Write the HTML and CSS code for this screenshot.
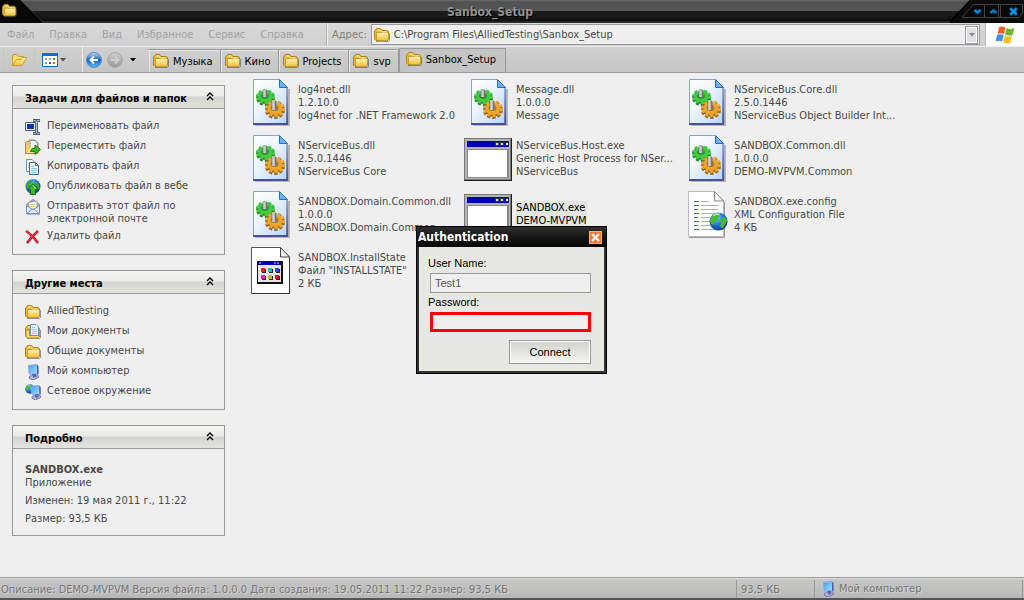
FILE: index.html
```html
<!DOCTYPE html>
<html lang="ru">
<head>
<meta charset="utf-8">
<title>Sanbox_Setup</title>
<link rel="stylesheet" href="styles.css">
</head>
<body>
<svg class="defs" aria-hidden="true">
  <defs>
    <linearGradient id="gFolder" x1="0" y1="0" x2="0" y2="1"><stop offset="0" stop-color="#fff6b8"/><stop offset="1" stop-color="#f2be3a"/></linearGradient>
    <linearGradient id="gPage" x1="0" y1="0" x2="1" y2="1"><stop offset="0" stop-color="#ffffff"/><stop offset="0.35" stop-color="#f2f8ff"/><stop offset="1" stop-color="#b4d4fb"/></linearGradient>
    <linearGradient id="gEdge" x1="0" y1="0" x2="0" y2="1"><stop offset="0" stop-color="#8ba6cf"/><stop offset="1" stop-color="#4a4e96"/></linearGradient>
    <radialGradient id="gGlobe" cx="0.4" cy="0.3" r="0.8"><stop offset="0" stop-color="#7cc8ff"/><stop offset="0.5" stop-color="#2470d8"/><stop offset="1" stop-color="#0c2a80"/></radialGradient>
    <linearGradient id="gBlueBtn" x1="0" y1="0" x2="0" y2="1"><stop offset="0" stop-color="#b8dcf8"/><stop offset="0.5" stop-color="#1560c0"/><stop offset="1" stop-color="#52c4ff"/></linearGradient>
    <linearGradient id="gGreyBtn" x1="0" y1="0" x2="0" y2="1"><stop offset="0" stop-color="#cccccc"/><stop offset="1" stop-color="#999999"/></linearGradient>
    <linearGradient id="gScreen" x1="0" y1="0" x2="1" y2="1"><stop offset="0" stop-color="#3c9cf4"/><stop offset="1" stop-color="#b8ecff"/></linearGradient>
  </defs>
  <symbol id="folder" viewBox="0 0 16 16">
    <path d="M2 14.500H14.500L15.500 13.500V6" fill="none" stroke="#555" stroke-opacity=".6"/>
    <path d="M.5 4V12L2 13.500H13.500L14.500 12V4.500L13.500 3.500H8L6.500 1.500H2.500L1.500 3Z" fill="#e8b83c" stroke="#b48018"/>
    <path d="M2.500 5.500H13.500L14.500 6.500V12L13.500 13.500H3.500L2.500 12.500Z" fill="url(#gFolder)" stroke="#c89828"/>
    <path d="M3 3H6L7.500 5H13" fill="none" stroke="#fff2a0"/>
  </symbol>
  <symbol id="folderopen" viewBox="0 0 16 16">
    <path d="M1.500 13.500V3.500L3 2.500H6L7.500 4.500H12.500V7" fill="#f8dc78" stroke="#c99a2c"/>
    <path d="M1.500 13.500L5.500 7.500H10L11.500 5.500H15.500L12 12.500L10 13.500Z" fill="url(#gFolder)" stroke="#d69b22"/>
  </symbol>
  <symbol id="docfolder" viewBox="0 0 16 16">
    <use href="#folder"/>
    <path d="M5.500 .5H11L13.500 3V11.500H5.500Z" fill="#eef8ff" stroke="#5c94c8"/>
    <path d="M7 3.500H10M7 5.500H12M7 7.500H12M7 9.500H12" stroke="#8cc4ec"/>
    <path d="M1 6V12.500L2.500 14H13L15 12V11.500H4.500V6Z" fill="#f8d870" stroke="#bc8a20"/>
  </symbol>
  <symbol id="gear" viewBox="-10 -10 20 20" preserveAspectRatio="none">
    <circle r="8" fill="none" stroke="currentColor" stroke-width="4" stroke-dasharray="3.100 1.927"/>
    <circle r="7.500" fill="currentColor"/>
  </symbol>
  <symbol id="dll" viewBox="0 0 48 48">
    <path d="M5 48H39V11" fill="none" stroke="#777" stroke-opacity=".45" stroke-width="2"/>
    <path d="M3.500 1.500H29L38 10V46.500H3.500Z" fill="url(#gPage)"/>
    <path d="M3.500 46V1.500H29" fill="none" stroke="#85a4d6"/>
    <path d="M37.200 9V46H3" fill="none" stroke="url(#gEdge)" stroke-width="2"/>
    <path d="M29.500 1.500V9.500H37.500Z" fill="#64b4fa" stroke="#3568b8"/>
    <use href="#gear" x="6" y="12" width="19" height="16" color="#26852a"/>
    <use href="#gear" x="6" y="11" width="19" height="15" color="#42cc42"/>
    <ellipse cx="15" cy="18" rx="4" ry="3" fill="#2c942c"/>
    <path d="M15 12V19" stroke="#777" stroke-width="5"/><path d="M14.500 11.500V19" stroke="#c6caca" stroke-width="2.500"/>
    <use href="#gear" x="15" y="23" width="20" height="18" color="#a0640e"/>
    <use href="#gear" x="15" y="22" width="20" height="17" color="#eca42e"/>
    <ellipse cx="24.500" cy="30" rx="4" ry="3" fill="#b47820"/>
    <path d="M24 23V32" stroke="#777" stroke-width="5"/><path d="M23.500 22.500V32" stroke="#cdd2d2" stroke-width="2.500"/>
  </symbol>
  <symbol id="exe" viewBox="0 0 48 43">
    <path d="M0 0H48V43H0Z" fill="#222"/><path d="M0 0H47V42H0Z" fill="#777"/>
    <path d="M1 1H46V41H1Z" fill="#b4b4b4"/>
    <path d="M3 3H45V9H3Z" fill="#0000b4"/>
    <path d="M31 4H35V8H31ZM36 4H40V8H36ZM41 4H45V8H41Z" fill="#333"/><path d="M32 5H34V7H32ZM37 5H39V7H37ZM42 5H44V7H42Z" fill="#ddd"/>
    <path d="M3 11H45V40H3Z" fill="#888"/><path d="M4 12H43V39H4Z" fill="#fff"/>
  </symbol>
  <symbol id="install" viewBox="0 0 48 48">
    <path d="M1.500 1.500H30L39.500 11V47.500H1.500Z" fill="#fff" stroke="#555"/>
    <path d="M30.500 1.500V11H39.500Z" fill="#eee" stroke="#444"/>
    <path d="M39.500 12V47.500H2" fill="none" stroke="#333"/>
    <path d="M7 15H33V38H7Z" fill="#111"/><path d="M8 19H31V36H8Z" fill="#e6e6e6"/><path d="M8 16H31V19H8Z" fill="#0000b0"/>
    <path d="M24 17H26M27 17H29M9 17H11" stroke="#ddd"/>
    <path d="M12 23H16V27H12ZM19 23H23V27H19ZM26 23H30V27H26ZM12 30H16V34H12ZM19 30H23V34H19ZM26 30H30V34H26Z" fill="#222"/>
    <path d="M11 22H15V26H11Z" fill="#d82828"/><path d="M18 22H22V26H18Z" fill="#28b8b8"/><path d="M25 22H29V26H25Z" fill="#3048e0"/><path d="M11 29H15V33H11Z" fill="#e028b8"/><path d="M18 29H22V33H18Z" fill="#c8b828"/><path d="M25 29H29V33H25Z" fill="#c02020"/>
  </symbol>
  <symbol id="globe" viewBox="0 0 20 20">
    <circle cx="10" cy="10" r="9.500" fill="url(#gGlobe)"/>
    <path d="M3 4Q7 0 11 1L12 4L9 6L10 9L6 10L5 14L2 12Q0 8 3 4ZM13 7L17 5L19 9L17 13L14 17L11 15L13 12L11 9Z" fill="#48b838"/>
    <path d="M5 4Q8 1 11 3" fill="none" stroke="#dff7ff" stroke-width="1.500" stroke-opacity=".8"/>
  </symbol>
  <symbol id="config" viewBox="0 0 48 48">
    <path d="M2.500 1.500H28L37.500 11V46.500H2.500Z" fill="#fff" stroke="#bbb"/>
    <path d="M3 47.500H38.500V12" fill="none" stroke="#999"/>
    <path d="M28.500 1.500V11H37.500Z" fill="#f4f4f4" stroke="#888"/>
    <path d="M8 11.500H13M8 15.500H13M8 19.500H12M8 23.500H13M8 27.500H12M8 31.500H13M8 35.500H12M8 39.500H13" stroke="#3a66d0"/>
    <path d="M15 11.500H23M15 15.500H32M15 19.500H32M15 23.500H31M15 27.500H24M15 31.500H24M15 35.500H24M15 39.500H28" stroke="#a9b0c8"/>
    <use href="#globe" x="23" y="22" width="19" height="19"/>
  </symbol>
  <symbol id="rename" viewBox="0 0 16 16">
    <path d="M.5 3.500H10.500V11.500H.5Z" fill="#fff" stroke="#4c5a84"/><path d="M2 5H9V10H2Z" fill="#0838b8"/>
    <path d="M8 1.500H10.500L11.500 2.500L12.500 1.500H15M11.500 2V14M8 14.500H10.500L11.500 13.500L12.500 14.500H15" fill="none" stroke="#4c5a84" stroke-width="3"/>
    <path d="M8.500 1.500H10.500L11.500 2.500L12.500 1.500H14.500M11.500 2V14M8.500 14.500H10.500L11.500 13.500L12.500 14.500H14.500" fill="none" stroke="#b8c4e4"/>
  </symbol>
  <symbol id="move" viewBox="0 0 16 16">
    <path d="M.5 14.500V3.500L2 2.500H4V1H10L13 4V14.500Z" fill="#f4cc60" stroke="#b8882c"/>
    <path d="M5 1.500H10L12.500 4V10H5Z" fill="#f0f8ff" stroke="#8098b8"/>
    <path d="M2 14L5 8H8V14Z" fill="#ffe890"/>
    <path d="M5.500 12.500Q6 9 10 9V6L15.500 10.500L10 15.500V12.500Z" fill="#44b828" stroke="#187818"/>
  </symbol>
  <symbol id="copy" viewBox="0 0 16 16">
    <path d="M1.500 .5H7L10.500 4V12.500H1.500Z" fill="#fff" stroke="#7890a8"/>
    <path d="M3 4.500H7M3 6.500H7M3 8.500H7" stroke="#a8c0d8"/>
    <path d="M4.500 3.500H10.500L13.500 6.500V15.500H4.500Z" fill="#f2faff" stroke="#3c6c9c"/>
    <path d="M10.500 3.500V6.500H13.500" fill="none" stroke="#3c6c9c"/>
    <path d="M6 7.500H9M6 9.500H12M6 11.500H12M6 13.500H12" stroke="#8cc4ec"/>
  </symbol>
  <symbol id="publish" viewBox="0 0 16 16">
    <circle cx="8" cy="7.500" r="7.500" fill="url(#gGlobe)"/>
    <path d="M1 7Q2 3 6 1L8 3L5 6L4 11ZM11 2Q16 6 14 11L10 6Z" fill="#38a838"/>
    <path d="M8 4.500L13.500 10.500H10.500V15.500H5.500V10.500H2.500Z" fill="#3cb828" stroke="#106818"/>
    <path d="M8 6.500L11 10" stroke="#b0f090"/>
  </symbol>
  <symbol id="mail" viewBox="0 0 16 16">
    <path d="M1.500 5.500L8 .5L14.500 5.500V15H1.500Z" fill="#94b4e8" stroke="#6880b8"/>
    <path d="M3.500 3.500L12 2V10H4Z" fill="#fff" stroke="#b8a070"/><path d="M5 5.500H10M5 7.500H11" stroke="#e8cc88"/>
    <path d="M1.500 6.500L8 11L14.500 6.500V14.500H1.500Z" fill="#dceaff" stroke="#7890c0"/>
    <path d="M2 14.500L7 10M14 14.500L9 10" stroke="#7890c0"/>
  </symbol>
  <symbol id="delete" viewBox="0 0 16 16">
    <path d="M1 2Q6 5 13 14M13 2Q7 7 2 14" fill="none" stroke="#a81020" stroke-width="2.500"/>
    <path d="M1.500 2Q6 6 12.500 13.500M12.500 2.500Q7 7 2.500 13" fill="none" stroke="#f03040" stroke-width="1.200"/>
  </symbol>
  <symbol id="computer" viewBox="0 0 16 16">
    <path d="M5 12L12 10L14 13L8 16L4 14Z" fill="#b4b4dc" stroke="#7474a8"/>
    <path d="M3.500 1.500L12 .5L13.500 9.500L6 11.500L4 9Z" fill="url(#gScreen)" stroke="#88a8d8"/>
    <path d="M12 1L13.500 2V9.500L12 10Z" fill="#4860a0"/>
    <path d="M7 10L11 9.500L11.500 13L8 13.500Z" fill="#5868b0"/>
  </symbol>
  <symbol id="network" viewBox="0 0 16 16">
    <svg x="0" y="0" width="10" height="10"><use href="#globe"/></svg>
    <svg x="3" y="1" width="15" height="15"><use href="#computer"/></svg>
  </symbol>
  <symbol id="back" viewBox="0 0 16 16">
    <circle cx="8" cy="8" r="7.500" fill="url(#gBlueBtn)" stroke="#5c8cc0"/>
    <path d="M12 8H5M8 4.500L4.500 8L8 11.500" fill="none" stroke="#fff" stroke-width="2"/>
  </symbol>
  <symbol id="forward" viewBox="0 0 16 16">
    <circle cx="8" cy="8" r="7.500" fill="url(#gGreyBtn)" stroke="#aaa"/>
    <path d="M4 8H11M8 4.500L11.500 8L8 11.500" fill="none" stroke="#d0d0d0" stroke-width="2"/>
  </symbol>
  <symbol id="views" viewBox="0 0 16 16">
    <path d="M.5 1.500H15.500V14.500H.5Z" fill="#fff" stroke="#1668d0"/><path d="M0 1H16V4H0Z" fill="#0c6ce0"/>
    <path d="M3 6H5V8H3Z" fill="#999"/><path d="M7 6H9V8H7Z" fill="#b8a0e0"/><path d="M11 6H13V8H11Z" fill="#28a028"/>
    <path d="M3 10H5V12H3Z" fill="#40b0e0"/><path d="M7 10H9V12H7Z" fill="#2050b0"/><path d="M11 10H13V12H11Z" fill="#d06020"/>
  </symbol>
  <symbol id="tri" viewBox="0 0 6 4"><path d="M0 0H6L3 3.500Z" fill="currentColor"/></symbol>
  <symbol id="chev" viewBox="0 0 8 9"><path d="M1 4L4 1L7 4M1 8L4 5L7 8" fill="none" stroke="#000" stroke-width="1.400"/></symbol>
</svg>

<header class="titlebar">
  <svg class="title-corner" viewBox="0 0 42 23"><path d="M0 0H19L42 23H0Z" fill="#080808"/><path d="M19 0L41 22" stroke="#000" stroke-width="2"/><path d="M20.500 0L43 22.500" stroke="#484848" stroke-width=".7"/><use href="#folder" x="2" y="3" width="15" height="15"/></svg>
  <h1 class="title">Sanbox_Setup</h1>
  <div class="window-buttons">
    <svg class="buttons-shape" viewBox="0 0 74 23" aria-hidden="true"><path d="M0 23L22 0H74V23Z" fill="#0b0b0b"/><path d="M0 22L21 0" stroke="#000" stroke-width="2"/><path d="M12.500 16.500L23.500 4.500H72.500V13L69 17.500H12.500ZM34.500 5V17M48.500 5V17M50.500 5V17" fill="#080808" stroke="#444"/></svg>
    <button class="win-btn" aria-label="Свернуть"><svg viewBox="0 0 9 9"><path d="M1.500 3L4.500 5.500L7.500 3" fill="none" stroke="#0a4064" stroke-width="4"/><path d="M1.500 3L4.500 5.500L7.500 3" fill="none" stroke="#0a90dc" stroke-width="2"/></svg></button>
    <button class="win-btn" aria-label="Развернуть"><svg viewBox="0 0 9 9"><path d="M1.500 6L4.500 3.500L7.500 6" fill="none" stroke="#0a3450" stroke-width="4"/><path d="M1.500 6L4.500 3.500L7.500 6" fill="none" stroke="#0a80c0" stroke-width="2"/></svg></button>
    <button class="win-btn" aria-label="Закрыть"><svg viewBox="0 0 9 9"><path d="M1 1L8 8M8 1L1 8" stroke="#0a4a70" stroke-width="3.500"/><path d="M1.500 1.500L7.500 7.500M7.500 1.500L1.500 7.500" stroke="#0a98ec" stroke-width="2.200"/></svg></button>
  </div>
</header>

<div class="menu-row">
  <nav class="menu">
    <button>Файл</button><button>Правка</button><button>Вид</button><button>Избранное</button><button>Сервис</button><button>Справка</button>
  </nav>
  <div class="address">
    <label for="addr">Адрес:</label>
    <div class="address-box">
      <svg class="icon"><use href="#folder"/></svg>
      <input id="addr" type="text" value="C:\Program Files\AlliedTesting\Sanbox_Setup">
      <button class="address-drop" aria-label="Показать список"><svg><use href="#tri"/></svg></button>
    </div>
  </div>
  <div class="flag"><svg viewBox="0 0 20 18"><path d="M4 1.500Q7 -.5 10.500 1.500L9 8Q6 6.500 2.500 8Z" fill="#f05a24"/><path d="M11.500 2Q15 4 19.500 2L17.500 9Q14 10.500 10 8.500Z" fill="#6cb830"/><path d="M2 9Q5.500 7.500 8.800 9L7 15.500Q4 14 .5 15.500Z" fill="#4090e8"/><path d="M9.800 9.500Q13 11.500 17.200 10L15.500 16.500Q12 18.500 8 16Z" fill="#f8c020"/></svg></div>
</div>

<div class="toolbar">
  <div class="tools">
    <button class="tool" aria-label="Папки"><svg class="icon"><use href="#folderopen"/></svg></button>
    <button class="tool tool-views" aria-label="Вид"><svg class="icon"><use href="#views"/></svg><svg class="tri"><use href="#tri"/></svg></button>
  </div>
  <div class="nav-tools">
    <button class="tool" aria-label="Назад"><svg class="icon"><use href="#back"/></svg></button>
    <button class="tool" aria-label="Вперед"><svg class="icon"><use href="#forward"/></svg></button>
    <button class="tool tool-more" aria-label="История"><svg class="tri"><use href="#tri"/></svg></button>
  </div>
  <div class="tabs">
    <button class="tab"><svg class="icon"><use href="#folder"/></svg>Музыка</button>
    <button class="tab"><svg class="icon"><use href="#folder"/></svg>Кино</button>
    <button class="tab"><svg class="icon"><use href="#folder"/></svg>Projects</button>
    <button class="tab"><svg class="icon"><use href="#folder"/></svg>svp</button>
    <button class="tab tab-current"><svg class="icon"><use href="#folder"/></svg>Sanbox_Setup</button>
  </div>
</div>

<main class="content">
  <aside class="sidebar">
    <section class="panel">
      <h2 class="panel-head">Задачи для файлов и папок<svg><use href="#chev"/></svg></h2>
      <ul class="panel-list">
        <li><a href="#"><svg class="icon"><use href="#rename"/></svg>Переименовать файл</a></li>
        <li><a href="#"><svg class="icon"><use href="#move"/></svg>Переместить файл</a></li>
        <li><a href="#"><svg class="icon"><use href="#copy"/></svg>Копировать файл</a></li>
        <li><a href="#"><svg class="icon"><use href="#publish"/></svg>Опубликовать файл в вебе</a></li>
        <li><a href="#"><svg class="icon"><use href="#mail"/></svg>Отправить этот файл по<br>электронной почте</a></li>
        <li><a href="#"><svg class="icon"><use href="#delete"/></svg>Удалить файл</a></li>
      </ul>
    </section>
    <section class="panel">
      <h2 class="panel-head">Другие места<svg><use href="#chev"/></svg></h2>
      <ul class="panel-list">
        <li><a href="#"><svg class="icon"><use href="#folder"/></svg>AlliedTesting</a></li>
        <li><a href="#"><svg class="icon"><use href="#docfolder"/></svg>Мои документы</a></li>
        <li><a href="#"><svg class="icon"><use href="#folder"/></svg>Общие документы</a></li>
        <li><a href="#"><svg class="icon"><use href="#computer"/></svg>Мой компьютер</a></li>
        <li><a href="#"><svg class="icon"><use href="#network"/></svg>Сетевое окружение</a></li>
      </ul>
    </section>
    <section class="panel">
      <h2 class="panel-head">Подробно<svg><use href="#chev"/></svg></h2>
      <div class="details">
        <p><strong>SANDBOX.exe</strong><br>Приложение</p>
        <p>Изменен: 19 мая 2011 г., 11:22</p>
        <p>Размер: 93,5 КБ</p>
      </div>
    </section>
  </aside>

  <ul class="files">
    <li class="file"><svg class="file-icon"><use href="#dll"/></svg><div class="file-text"><p>log4net.dll</p><p>1.2.10.0</p><p>log4net for .NET Framework 2.0</p></div></li>
    <li class="file"><svg class="file-icon"><use href="#dll"/></svg><div class="file-text"><p>Message.dll</p><p>1.0.0.0</p><p>Message</p></div></li>
    <li class="file"><svg class="file-icon"><use href="#dll"/></svg><div class="file-text"><p>NServiceBus.Core.dll</p><p>2.5.0.1446</p><p>NServiceBus Object Builder Int...</p></div></li>
    <li class="file"><svg class="file-icon"><use href="#dll"/></svg><div class="file-text"><p>NServiceBus.dll</p><p>2.5.0.1446</p><p>NServiceBus Core</p></div></li>
    <li class="file"><svg class="file-icon"><use href="#exe" x="-4" y="4" width="48" height="43"/></svg><div class="file-text"><p>NServiceBus.Host.exe</p><p>Generic Host Process for NSer...</p><p>NServiceBus</p></div></li>
    <li class="file"><svg class="file-icon"><use href="#dll"/></svg><div class="file-text"><p>SANDBOX.Common.dll</p><p>1.0.0.0</p><p>DEMO-MVPVM.Common</p></div></li>
    <li class="file"><svg class="file-icon"><use href="#dll"/></svg><div class="file-text"><p>SANDBOX.Domain.Common.dll</p><p>1.0.0.0</p><p>SANDBOX.Domain.Common</p></div></li>
    <li class="file"><svg class="file-icon"><use href="#exe" x="-4" y="4" width="48" height="43"/></svg><div class="file-text file-selected"><p>SANDBOX.exe</p><p>DEMO-MVPVM</p></div></li>
    <li class="file"><svg class="file-icon"><use href="#config"/></svg><div class="file-text"><p>SANDBOX.exe.config</p><p>XML Configuration File</p><p>4 КБ</p></div></li>
    <li class="file"><svg class="file-icon"><use href="#install"/></svg><div class="file-text"><p>SANDBOX.InstallState</p><p>Файл "INSTALLSTATE"</p><p>2 КБ</p></div></li>
  </ul>
</main>

<form class="dialog" role="dialog" aria-labelledby="dlg">
  <div class="dialog-head"><h2 id="dlg">Authentication</h2><button type="button" class="dialog-close" aria-label="Close"><svg viewBox="0 0 9 9"><path d="M1 1L8 8M8 1L1 8" stroke="#fff" stroke-width="2"/></svg></button></div>
  <div class="dialog-body">
    <label for="user">User Name:</label>
    <input id="user" type="text" value="Test1" disabled>
    <label for="pass">Password:</label>
    <input id="pass" class="invalid" type="password">
    <button type="button" class="connect">Connect</button>
  </div>
</form>

<footer class="statusbar">
  <span class="status-text">Описание: DEMO-MVPVM Версия файла: 1.0.0.0 Дата создания: 19.05.2011 11:22 Размер: 93,5 КБ</span>
  <span class="status-size">93,5 КБ</span>
  <span class="status-place"><svg class="icon"><use href="#computer"/></svg>Мой компьютер</span>
</footer>
</body>
</html>
```
FILE: styles.css
```css
* { box-sizing: border-box; }
body {
  margin: 0;
  height: 100vh;
  display: flex;
  flex-direction: column;
  position: relative;
  overflow: hidden;
  background: #efefef;
  color: #484848;
  font: 11px/13px "DejaVu Sans Condensed", "DejaVu Sans", sans-serif;
}
h1, h2, p, ul { margin: 0; padding: 0; list-style: none; font-size: 11px; }
button, input { font: inherit; color: inherit; margin: 0; padding: 0; border: 0; background: none; }
a { color: inherit; text-decoration: none; }
.defs { position: absolute; width: 0; height: 0; }
.icon { width: 16px; height: 16px; flex: none; overflow: visible; }
.tri { width: 6px; height: 4px; flex: none; }

.titlebar {
  display: flex;
  justify-content: space-between;
  align-items: center;
  height: 23px;
  flex: none;
  background: linear-gradient(#6c6c6c 0, #505050 2px, #555 11px, #1e1e1e 11px, #101010 21px, #333 22px);
}
.title-corner { width: 42px; height: 23px; }
.title { margin-right: 12px; padding-top: 1px; font-size: 12px; color: #929292; text-shadow: 1px 1px #000; }
.window-buttons {
  position: relative;
  display: flex;
  align-items: center;
  gap: 4px;
  width: 74px;
  height: 23px;
  padding-left: 21px;
}
.buttons-shape { position: absolute; inset: 0; }
.win-btn { position: relative; width: 12px; height: 12px; display: grid; place-items: center; }
.win-btn svg { width: 9px; height: 9px; }
.win-btn:last-child { width: 20px; }

.menu-row {
  display: flex;
  height: 23px;
  flex: none;
  background: linear-gradient(#d9d9d9, #cfcfcf);
}
.menu { display: flex; align-items: center; gap: 15px; width: 327px; padding-left: 7px; color: #a3a3a3; border-right: 1px solid #b4b4b4; }
.address { flex: 1; display: flex; align-items: center; gap: 4px; padding: 0 5px 0 4px; color: #858078; border-left: 1px solid #eee; }
.address-box { flex: 1; height: 21px; display: flex; align-items: center; gap: 4px; padding: 0 1px 0 2px; border: 1px solid #999; background: #efefef; color: #484848; }
.address-box input { flex: 1; min-width: 0; outline: 0; }
.address-drop { width: 13px; height: 18px; border: 1px solid #999; background: #e0e0e3; color: #888; display: grid; place-items: center; box-shadow: inset 0 0 0 1px #fff; }
.address-drop svg { width: 6px; height: 4px; }
.flag { width: 39px; border-left: 1px solid #bbb; background: #fff; display: grid; place-items: center; }
.flag svg { width: 20px; height: 18px; }

.toolbar {
  display: flex;
  height: 27px;
  flex: none;
  border-top: 1px solid #eee;
  border-bottom: 1px solid #999;
  background: linear-gradient(#d0d0d0, #c6c6c6);
  color: #000;
}
.tools { display: flex; align-items: center; width: 83px; padding-left: 3px; border-right: 1px solid #eee; }
.tool { display: flex; align-items: center; gap: 2px; height: 20px; }
.tools .tool { padding-left: 7px; border-left: 1px dotted #c8bfa0; }
.tools .tool + .tool { margin-left: 7px; color: #555; }
.nav-tools { display: flex; align-items: center; gap: 5px; width: 66px; padding-left: 3px; }
.tool-more { padding-left: 2px; }
.tabs { display: flex; align-items: stretch; padding-top: 1px; }
.tab { display: flex; align-items: center; gap: 4px; padding: 0 7px 0 4px; border: solid #999; border-width: 1px 1px 0 0; box-shadow: inset 1px 1px #e8e8e8; margin-top: 1px; }
.tab-current { margin-top: 0; padding: 0 9px 3px 6px; background: #c4c4c4; border-left-width: 1px; box-shadow: none; }

.content { flex: 1; display: flex; min-height: 0; }
.sidebar { width: 250px; flex: none; padding: 12px 25px 0 12px; }
.panel { border: 1px solid #999; margin-bottom: 15px; }
.panel-head {
  display: flex;
  align-items: center;
  justify-content: space-between;
  height: 23px;
  padding: 2px 10px 0 12px;
  color: #000;
  border-bottom: 1px solid #999;
  background: linear-gradient(#f4f4f2 0, #eaeae8 10px, #d4d5d0 11px, #e2e2df 22px);
}
.panel-head svg { width: 8px; height: 9px; margin-bottom: 3px; }
.panel-list { padding: 10px 12px 5px; }
.panel-list a { display: flex; gap: 6px; min-height: 20px; padding: 0 0 4px; }
.details { padding: 14px 12px 5px; }
.details p { margin-bottom: 5px; }

.files { flex: 1; display: grid; grid-template-columns: repeat(3, 218px); grid-auto-rows: 56px; align-content: start; padding-top: 1px; }
.file { display: flex; align-items: center; }
.file-icon { width: 48px; height: 48px; flex: none; overflow: visible; }
.file-text { white-space: nowrap; }
.file-selected { background: #e4e5df; color: #000; }

.dialog { position: absolute; left: 416px; top: 226px; width: 191px; background: #e7e8e3; border: solid #333; border-width: 0 3px 3px; color: #000; outline: 1px solid #000; outline-offset: -1px; }
.dialog-head { display: flex; align-items: center; justify-content: space-between; height: 21px; margin: 0 -2px; padding: 2px 4px 0 1px; color: #fff; background: linear-gradient(#333, #161616 11px, #060606); }
.dialog-head h2 { font-size: 12px; }
.dialog-close { width: 13px; height: 13px; background: #f47838; border: 1px solid #ffb080; display: grid; place-items: center; }
.dialog-close svg { width: 9px; height: 9px; }
.dialog-body { display: flex; flex-direction: column; padding: 10px 13px 7px 9px; font-family: "Liberation Sans", Arial, sans-serif; }
.dialog-body input { height: 20px; width: 161px; margin: 3px 0 3px 2px; padding: 0 4px; border: 1px solid #999; background: #efefef; color: #555; }
.dialog-body .invalid { border: 3px solid red; margin-bottom: 8px; }
.connect { align-self: flex-end; width: 82px; height: 24px; border: 1px solid #999; box-shadow: inset 0 0 0 1px #fff; background: linear-gradient(#d0d2cc, #f6f6f4); }

.statusbar {
  display: flex;
  align-items: stretch;
  height: 23px;
  flex: none;
  line-height: 20px;
  border-top: 1px solid #999;
  border-bottom: 2px solid #555;
  box-shadow: inset 0 1px #ddd;
  background: linear-gradient(#c8c8c6, #b8b8b8);
  color: #777;
  text-shadow: 1px 1px #d4d4d4;
  padding-top: 2px;
}
.status-text { flex: 1; padding-left: 1px; }
.status-size { width: 78px; padding-left: 4px; border-left: 1px solid #999; }
.status-place { width: 209px; display: flex; align-items: center; gap: 3px; padding-left: 5px; border-left: 1px solid #999; border-right: 1px solid #999; margin-right: 1px; }
```
